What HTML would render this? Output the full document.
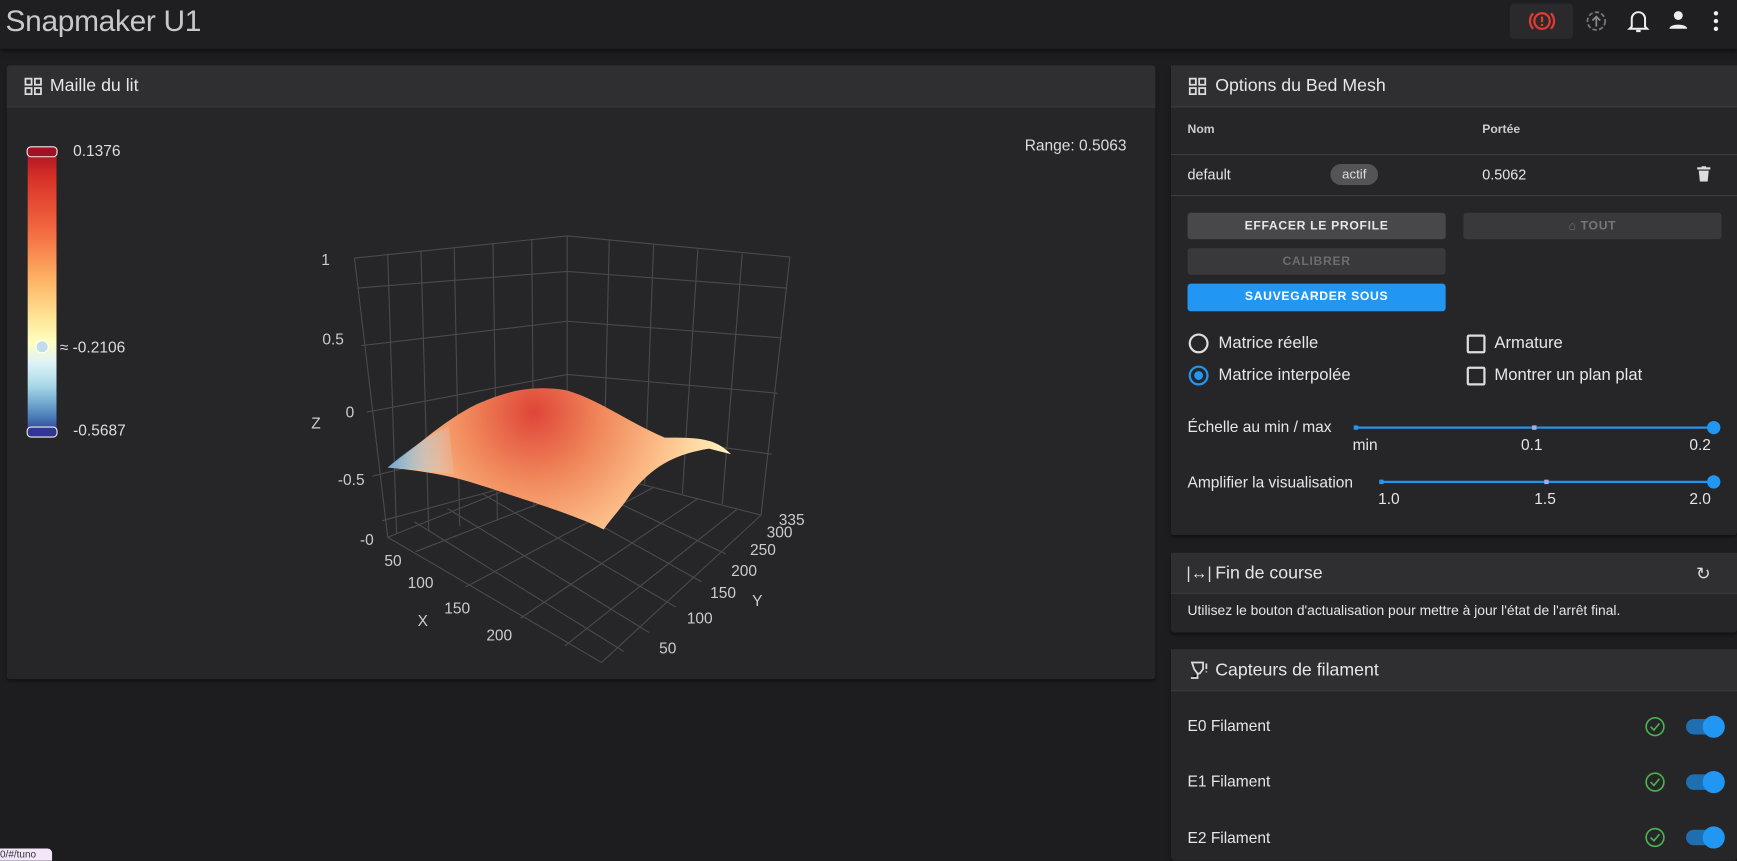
<!DOCTYPE html>
<html><head><meta charset="utf-8"><style>
html,body{margin:0;padding:0;background:#1d1d1f;overflow:hidden;width:1737px;height:861px}
#w{position:absolute;left:0;top:0;width:1568px;height:777px;transform:scale(1.10778);transform-origin:0 0;font-family:"Liberation Sans",Arial,sans-serif;color:#e6e6e6}
.a{position:absolute}
.hdr{left:0;top:0;width:1568px;height:44px;background:#1f1f21;box-shadow:0 2px 4px rgba(0,0,0,.5)}
.card{background:#262628;border-radius:3px;box-shadow:0 2px 3px rgba(0,0,0,.4)}
.ch{background:#2f2f32;border-bottom:1px solid #3a3a3d;font-size:16px;color:#e8e8e8}
.btn{font-size:11px;font-weight:bold;letter-spacing:.6px;text-align:center;border-radius:3px;line-height:24px}
.t13{font-size:13px}
.lab{font-size:14px;color:#ddd}
</style></head><body><div id="w">
<div class="a hdr"></div>
<div class="a" style="left:5px;top:4px;font-size:27px;color:#c8c8c8;letter-spacing:-.3px">Snapmaker U1</div>
<div class="a" style="left:1363px;top:3px;width:57px;height:32px;background:#2a2a2c;border-radius:4px"></div>
<svg class="a" style="left:1379px;top:7px" width="26" height="24" viewBox="0 0 26 24"><circle cx="13" cy="12" r="7" fill="none" stroke="#e53935" stroke-width="2"/><path d="M5 5a10 10 0 0 0 0 14M21 5a10 10 0 0 1 0 14" fill="none" stroke="#e53935" stroke-width="2"/><rect x="12" y="8" width="2" height="5" fill="#e53935"/><rect x="12" y="14.5" width="2" height="2" fill="#e53935"/></svg>
<svg class="a" style="left:1431px;top:9px" width="20" height="20"><circle cx="10" cy="10" r="8" fill="none" stroke="#777" stroke-width="1.6" stroke-dasharray="4 2"/><path d="M10 15V6M6.5 9.5L10 6l3.5 3.5" fill="none" stroke="#888" stroke-width="1.6"/></svg>
<svg class="a" style="left:1469px;top:8px" width="20" height="22"><path d="M4 16V9a6 6 0 0 1 12 0v7l2 2H2z" fill="none" stroke="#eee" stroke-width="1.8"/><path d="M8 20h4" stroke="#eee" stroke-width="2"/></svg>
<svg class="a" style="left:1506px;top:9px" width="18" height="18"><circle cx="9" cy="5" r="4" fill="#eee"/><path d="M1 17c0-5 16-5 16 0z" fill="#eee"/></svg>
<svg class="a" style="left:1546px;top:9px" width="6" height="20"><circle cx="3" cy="3" r="2" fill="#eee"/><circle cx="3" cy="10" r="2" fill="#eee"/><circle cx="3" cy="17" r="2" fill="#eee"/></svg>

<div class="a card" style="left:6px;top:59px;width:1037px;height:554px"></div>
<div class="a ch" style="left:6px;top:59px;width:1037px;height:37px;border-radius:3px 3px 0 0"></div>
<svg class="a" style="left:22px;top:70px" width="16" height="16"><g fill="none" stroke="#ddd" stroke-width="1.6"><rect x="1" y="1" width="5.5" height="5.5"/><rect x="9.5" y="1" width="5.5" height="5.5"/><rect x="1" y="9.5" width="5.5" height="5.5"/><rect x="9.5" y="9.5" width="5.5" height="5.5"/></g></svg>
<div class="a" style="left:45px;top:69px;font-size:16px">Maille du lit</div>
<div class="a" style="left:25px;top:134px;width:26px;height:257px;background:linear-gradient(#a50f26,#d73027 10%,#f46d43 30%,#fdae61 45%,#fee090 58%,#ffffbf 68%,#e0f3f8 75%,#abd9e9 83%,#74add1 89%,#4575b4 95%,#313695);"></div>
<div class="a" style="left:24px;top:132px;width:26px;height:8px;border:1px solid #eee;border-radius:4px;background:#a50f26"></div>
<div class="a" style="left:24px;top:385px;width:26px;height:8px;border:1px solid #eee;border-radius:4px;background:#313695"></div>
<div class="a" style="left:32px;top:307px;width:10px;height:10px;border:1.5px solid #fff;border-radius:50%;background:#c0dde9"></div>
<div class="a lab" style="left:66px;top:128px">0.1376</div>
<div class="a lab" style="left:54px;top:305px">≈ -0.2106</div>
<div class="a lab" style="left:66px;top:380px">-0.5687</div>
<div class="a lab" style="left:925px;top:123px">Range: 0.5063</div>
<svg class="a" style="left:270px;top:200px" width="470" height="410" viewBox="270 200 470 410">
<defs><radialGradient id="g" cx="482" cy="372" r="200" gradientUnits="userSpaceOnUse"><stop offset="0" stop-color="#df4538"/><stop offset=".3" stop-color="#f0875a"/><stop offset=".6" stop-color="#fcc08a"/><stop offset=".85" stop-color="#ffecb8"/><stop offset="1" stop-color="#fff6d4"/></radialGradient>
<linearGradient id="b" x1="350" y1="0" x2="420" y2="0" gradientUnits="userSpaceOnUse"><stop offset="0" stop-color="#6aa4d0"/><stop offset="1" stop-color="#e8f4f4" stop-opacity="0"/></linearGradient></defs>
<g stroke="#4a4a4d" stroke-width="1" fill="none">
<path d="M320 233L512 213L713 232M320 233L350 485M713 232L687 465M512 213V420M350 485L512 420L687 465M350 485L543 598L687 465"/>
<path d="M323 260L512 245L710 260M326 312L512 290L706 305M331 372L512 338L702 355M336 430L512 385L697 410"/>
<path d="M350 229L358 482M380 226L387 479M410 223L415 475M445 220L449 470M480 216L482 458M550 217L545 427M590 221L582 437M630 225L616 446M670 229L652 455"/>
<path d="M374 471L563 588M404 459L586 571M436 446L610 548M468 433L633 525M497 425L655 500M520 423L345 470M550 430L375 498M590 440L420 530M630 450L470 558M665 460L510 583"/>
</g>
<path d="M350 422C380 400 400 380 430 365C460 352 480 348 510 352C540 360 565 380 600 395C630 395 645 395 660 410L640 405C610 410 590 420 570 445C560 460 550 470 545 478C520 465 470 450 440 440C410 430 390 426 350 422Z" fill="url(#g)"/>
<path d="M350 422C370 405 385 395 405 385L410 428C390 425 370 424 350 422Z" fill="url(#b)"/>
<g fill="#ccc" font-size="14" font-family="Liberation Sans,sans-serif">
<text x="290" y="239">1</text><text x="291" y="311">0.5</text><text x="312" y="377">0</text><text x="281" y="387">Z</text><text x="305" y="438">-0.5</text><text x="325" y="492">-0</text>
<text x="347" y="511">50</text><text x="368" y="531">100</text><text x="401" y="554">150</text><text x="439" y="578">200</text><text x="377" y="565">X</text>
<text x="703" y="474">335</text><text x="692" y="485">300</text><text x="677" y="501">250</text><text x="660" y="520">200</text><text x="641" y="540">150</text><text x="620" y="563">100</text><text x="595" y="590">50</text><text x="679" y="547">Y</text></g>
</svg>

<div class="a card" style="left:1057px;top:59px;width:511px;height:424px"></div>
<div class="a ch" style="left:1057px;top:59px;width:511px;height:37px"></div>
<svg class="a" style="left:1073px;top:70px" width="16" height="16"><g fill="none" stroke="#ddd" stroke-width="1.6"><rect x="1" y="1" width="5.5" height="5.5"/><rect x="9.5" y="1" width="5.5" height="5.5"/><rect x="1" y="9.5" width="5.5" height="5.5"/><rect x="9.5" y="9.5" width="5.5" height="5.5"/></g></svg>
<div class="a" style="left:1097px;top:69px;font-size:16px">Options du Bed Mesh</div>
<div class="a" style="left:1072px;top:111px;font-size:11px;font-weight:bold;color:#ccc">Nom</div>
<div class="a" style="left:1338px;top:111px;font-size:11px;font-weight:bold;color:#ccc">Portée</div>
<div class="a" style="left:1057px;top:139px;width:511px;height:1px;background:#3c3c3f"></div>
<div class="a t13" style="left:1072px;top:150px">default</div>
<div class="a" style="left:1201px;top:148px;width:43px;height:19px;border-radius:10px;background:#545457;font-size:12px;text-align:center;line-height:19px;color:#ddd">actif</div>
<div class="a t13" style="left:1338px;top:150px">0.5062</div>
<svg class="a" style="left:1532px;top:150px" width="12" height="14"><rect x="0" y="1" width="12" height="2" fill="#ddd"/><rect x="4" y="0" width="4" height="2" fill="#ddd"/><path d="M1.5 4h9l-1 10h-7z" fill="#ddd"/></svg>
<div class="a" style="left:1057px;top:176px;width:511px;height:1px;background:#3c3c3f"></div>
<div class="a btn" style="left:1072px;top:192px;width:233px;background:#48484b;color:#e6e6e6">EFFACER LE PROFILE</div>
<div class="a btn" style="left:1321px;top:192px;width:233px;background:#39393b;color:#777">⌂ TOUT</div>
<div class="a btn" style="left:1072px;top:224px;width:233px;background:#39393b;color:#6c6c6c">CALIBRER</div>
<div class="a btn" style="left:1072px;top:256px;width:233px;background:#2196f3;color:#fff;height:25px">SAUVEGARDER SOUS</div>
<div class="a" style="left:1073px;top:301px;width:14px;height:14px;border:2px solid #ddd;border-radius:50%"></div>
<div class="a" style="left:1073px;top:330px;width:14px;height:14px;border:2px solid #2196f3;border-radius:50%"><div style="margin:3px;width:8px;height:8px;border-radius:50%;background:#2196f3"></div></div>
<div class="a" style="left:1100px;top:301px;font-size:15px">Matrice réelle</div>
<div class="a" style="left:1100px;top:330px;font-size:15px">Matrice interpolée</div>
<div class="a" style="left:1324px;top:302px;width:13px;height:13px;border:2px solid #ddd;border-radius:2px"></div>
<div class="a" style="left:1324px;top:331px;width:13px;height:13px;border:2px solid #ddd;border-radius:2px"></div>
<div class="a" style="left:1349px;top:301px;font-size:15px">Armature</div>
<div class="a" style="left:1349px;top:330px;font-size:15px">Montrer un plan plat</div>
<div class="a" style="left:1072px;top:377px;font-size:14px">Échelle au min / max</div>
<div class="a" style="left:1224px;top:385px;width:323px;height:2px;background:#2196f3"></div>
<div class="a" style="left:1222px;top:384px;width:4px;height:4px;background:#2196f3"></div>
<div class="a" style="left:1383px;top:384px;width:4px;height:4px;background:#aad"></div>
<div class="a" style="left:1541px;top:380px;width:12px;height:12px;border-radius:50%;background:#2196f3"></div>
<div class="a" style="left:1221px;top:393px;font-size:14px">min</div>
<div class="a" style="left:1373px;top:393px;font-size:14px">0.1</div>
<div class="a" style="left:1525px;top:393px;font-size:14px">0.2</div>
<div class="a" style="left:1072px;top:427px;font-size:14px">Amplifier la visualisation</div>
<div class="a" style="left:1247px;top:434px;width:300px;height:2px;background:#2196f3"></div>
<div class="a" style="left:1245px;top:433px;width:4px;height:4px;background:#2196f3"></div>
<div class="a" style="left:1394px;top:433px;width:4px;height:4px;background:#aad"></div>
<div class="a" style="left:1541px;top:429px;width:12px;height:12px;border-radius:50%;background:#2196f3"></div>
<div class="a" style="left:1244px;top:442px;font-size:14px">1.0</div>
<div class="a" style="left:1385px;top:442px;font-size:14px">1.5</div>
<div class="a" style="left:1525px;top:442px;font-size:14px">2.0</div>

<div class="a card" style="left:1057px;top:499px;width:511px;height:72px"></div>
<div class="a ch" style="left:1057px;top:499px;width:511px;height:36px"></div>
<div class="a" style="left:1071px;top:509px;font-size:15px;color:#ddd">|↔|</div>
<div class="a" style="left:1097px;top:509px;font-size:16px">Fin de course</div>
<div class="a" style="left:1531px;top:508px;font-size:16px;color:#ddd">↻</div>
<div class="a" style="left:1072px;top:544px;font-size:12.5px">Utilisez le bouton d'actualisation pour mettre à jour l'état de l'arrêt final.</div>

<div class="a card" style="left:1057px;top:586px;width:511px;height:191px"></div>
<div class="a ch" style="left:1057px;top:586px;width:511px;height:37px"></div>
<svg class="a" style="left:1072px;top:596px" width="20" height="20"><path d="M4 2h10v6l-3 4l-2 0l-3-4z" fill="none" stroke="#ddd" stroke-width="1.6"/><path d="M9 12v4H3M17 3v5M17 10v1" stroke="#ddd" stroke-width="1.6"/></svg>
<div class="a" style="left:1097px;top:597px;font-size:16px">Capteurs de filament</div>
<div class="a" style="left:1072px;top:647px;font-size:14px">E0 Filament</div>
<div class="a" style="left:1072px;top:697px;font-size:14px">E1 Filament</div>
<div class="a" style="left:1072px;top:748px;font-size:14px">E2 Filament</div>
<svg class="a" style="left:1484px;top:645px" width="20" height="130"><g fill="none" stroke="#4caf50" stroke-width="1.5"><circle cx="10" cy="11" r="8"/><path d="M6 11l3 3l5-6"/><circle cx="10" cy="61" r="8"/><path d="M6 61l3 3l5-6"/><circle cx="10" cy="111" r="8"/><path d="M6 111l3 3l5-6"/></g></svg>
<div class="a" style="left:1522px;top:649px;width:32px;height:14px;border-radius:7px;background:#1f6fb0"></div><div class="a" style="left:1537px;top:646px;width:20px;height:20px;border-radius:50%;background:#2196f3"></div>
<div class="a" style="left:1522px;top:699px;width:32px;height:14px;border-radius:7px;background:#1f6fb0"></div><div class="a" style="left:1537px;top:696px;width:20px;height:20px;border-radius:50%;background:#2196f3"></div>
<div class="a" style="left:1522px;top:749px;width:32px;height:14px;border-radius:7px;background:#1f6fb0"></div><div class="a" style="left:1537px;top:746px;width:20px;height:20px;border-radius:50%;background:#2196f3"></div>
<div class="a" style="left:0;top:766px;width:47px;height:11px;background:#f1e6fa;border-radius:0 4px 0 0;font-size:9px;color:#333;overflow:hidden">0/#/tuno</div>
</div></body></html>
